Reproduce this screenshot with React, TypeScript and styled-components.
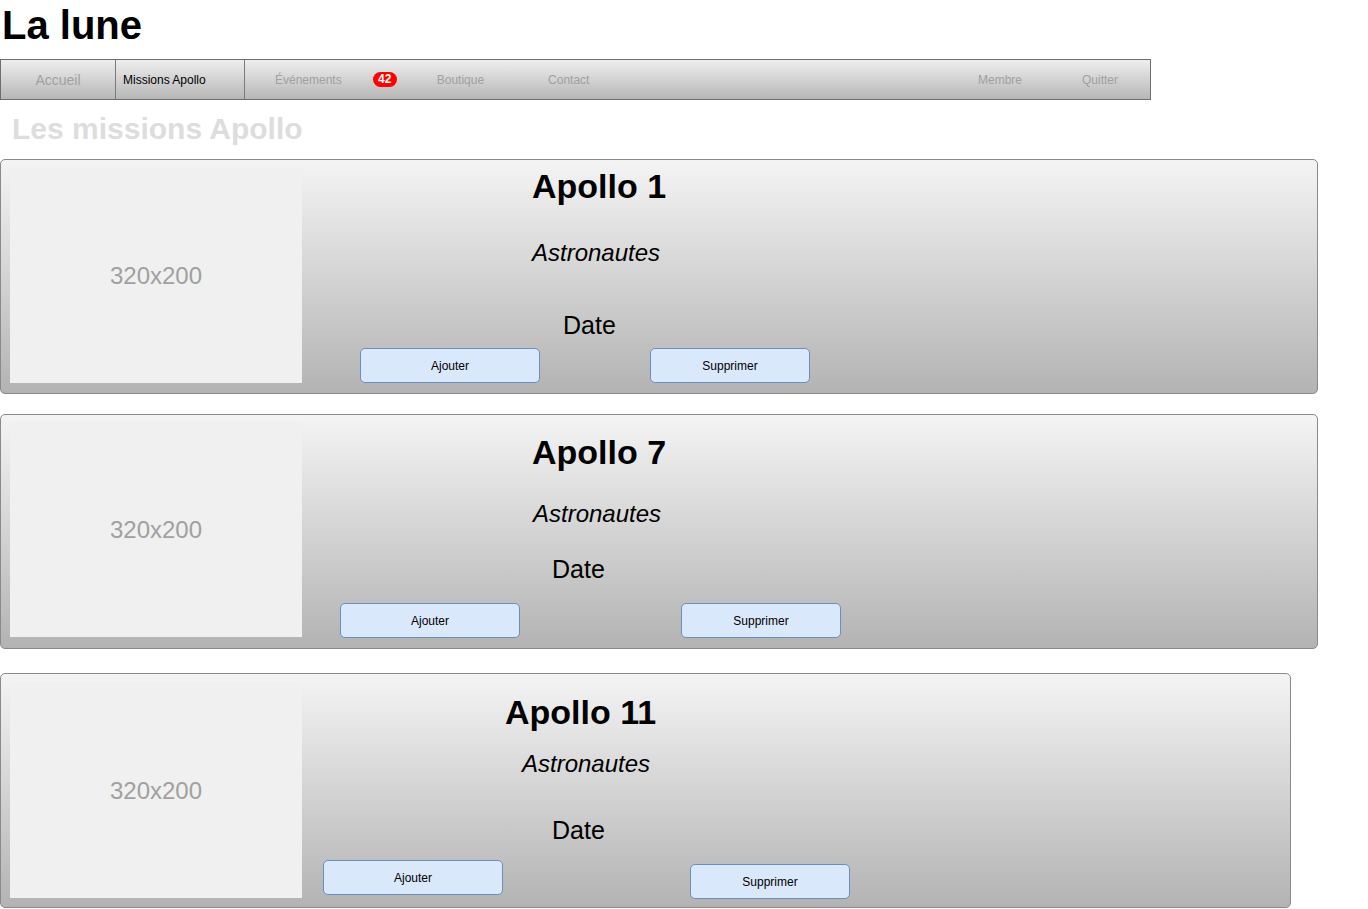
import styled, { createGlobalStyle } from "styled-components";

const GlobalStyle = createGlobalStyle`
  html, body {
    margin: 0;
    padding: 0;
    background: #ffffff;
    font-family: "Liberation Sans", Arial, sans-serif;
  }
  #root {
    width: 1368px;
    height: 909px;
    overflow: hidden;
  }
`;

const Page = styled.div`
  display: flex;
  flex-direction: column;
  align-items: flex-start;
`;

const SiteTitle = styled.h1`
  margin: 0;
  padding: 5px 0 0 2px;
  font-size: 40px;
  line-height: 1;
  font-weight: bold;
  color: #000;
`;

const NavBar = styled.nav`
  margin-top: 14px;
  box-sizing: border-box;
  width: 1151px;
  height: 41px;
  border: 1px solid #6e6e6e;
  background: linear-gradient(#eeeeee, #b7b7b7);
  display: flex;
  align-items: stretch;
  padding-right: 32px;
`;

const NavCell = styled.div<{ $w: number; $pad?: number; $center?: boolean; $active?: boolean; $size?: number }>`
  box-sizing: border-box;
  width: ${(p) => p.$w}px;
  border-right: 1px solid #7a7a7a;
  display: flex;
  align-items: center;
  justify-content: ${(p) => (p.$center ? "center" : "flex-start")};
  padding-left: ${(p) => p.$pad ?? 0}px;
  font-size: ${(p) => p.$size ?? 12}px;
  color: ${(p) => (p.$active ? "#000" : "#a0a0a0")};
`;

const NavLink = styled.span<{ $ml?: number; $push?: boolean }>`
  align-self: center;
  margin-left: ${(p) => (p.$push ? "auto" : `${p.$ml ?? 0}px`)};
  font-size: 12px;
  color: #a0a0a0;
`;

const Badge = styled.span<{ $ml: number }>`
  align-self: center;
  margin-left: ${(p) => p.$ml}px;
  width: 24px;
  height: 15px;
  border-radius: 8px;
  background: #ff0000;
  color: #fff;
  font-size: 12px;
  font-weight: bold;
  line-height: 15px;
  text-align: center;
`;

const SectionTitle = styled.h2`
  margin: 14px 0 0 12px;
  font-size: 30px;
  line-height: 1;
  font-weight: bold;
  color: #dddddd;
`;

const CardList = styled.div`
  margin-top: 15px;
  display: flex;
  flex-direction: column;
`;

const Card = styled.section<{ $w: number; $mt: number }>`
  box-sizing: border-box;
  width: ${(p) => p.$w}px;
  height: 235px;
  margin-top: ${(p) => p.$mt}px;
  border: 1px solid #8a8a8a;
  border-radius: 5px;
  background: linear-gradient(#f4f4f4, #b3b3b3);
  display: flex;
  align-items: flex-start;
`;

const Placeholder = styled.div<{ $mt: number }>`
  margin: ${(p) => p.$mt}px 0 0 9px;
  width: 292px;
  height: 215px;
  background: #f0f0f0;
  display: flex;
  align-items: center;
  justify-content: center;
  font-size: 24px;
  color: #a0a0a0;
  flex-shrink: 0;
`;

const Stage = styled.div`
  display: flex;
  flex-direction: column;
  align-items: flex-start;
`;

const MissionName = styled.h3<{ $mt: number; $ml: number }>`
  margin: ${(p) => p.$mt}px 0 0 ${(p) => p.$ml}px;
  font-size: 34px;
  line-height: 1;
  font-weight: bold;
  color: #000;
  white-space: nowrap;
`;

const Crew = styled.div<{ $mt: number; $ml: number }>`
  margin: ${(p) => p.$mt}px 0 0 ${(p) => p.$ml}px;
  font-size: 24px;
  line-height: 1;
  font-style: italic;
  color: #000;
`;

const LaunchDate = styled.div<{ $mt: number; $ml: number }>`
  margin: ${(p) => p.$mt}px 0 0 ${(p) => p.$ml}px;
  font-size: 25px;
  line-height: 1;
  color: #000;
`;

const Actions = styled.div<{ $mt: number }>`
  margin-top: ${(p) => p.$mt}px;
  display: flex;
  align-items: flex-start;
`;

const ActionButton = styled.button<{ $w: number; $ml: number; $mt?: number }>`
  box-sizing: border-box;
  width: ${(p) => p.$w}px;
  height: 35px;
  margin: ${(p) => p.$mt ?? 0}px 0 0 ${(p) => p.$ml}px;
  padding: 0;
  border: 1px solid #6c8ebf;
  border-radius: 5px;
  background: #dae8fc;
  font-family: "Liberation Sans", Arial, sans-serif;
  font-size: 12px;
  color: #000;
`;

type Mission = {
  name: string;
  width: number;
  gap: number;
  imgTop: number;
  title: [number, number];
  crew: [number, number];
  date: [number, number];
  actionsTop: number;
  add: number;
  remove: number;
  removeDrop?: number;
};

const missions: Mission[] = [
  { name: "Apollo 1", width: 1318, gap: 0, imgTop: 8, title: [9, 230], crew: [38, 230], date: [48, 261], actionsTop: 10, add: 58, remove: 110 },
  { name: "Apollo 7", width: 1318, gap: 20, imgTop: 7, title: [20, 230], crew: [33, 231], date: [31, 250], actionsTop: 21, add: 38, remove: 161 },
  { name: "Apollo 11", width: 1291, gap: 24, imgTop: 9, title: [21, 203], crew: [23, 220], date: [42, 250], actionsTop: 17, add: 21, remove: 187, removeDrop: 4 },
];

export default function App() {
  return (
    <>
      <GlobalStyle />
      <Page>
        <SiteTitle>La lune</SiteTitle>
        <NavBar>
          <NavCell $w={115} $center $size={14}>Accueil</NavCell>
          <NavCell $w={129} $pad={7} $active>Missions Apollo</NavCell>
          <NavLink $ml={30}>Événements</NavLink>
          <Badge $ml={31}>42</Badge>
          <NavLink $ml={40}>Boutique</NavLink>
          <NavLink $ml={64}>Contact</NavLink>
          <NavLink $push>Membre</NavLink>
          <NavLink $ml={60}>Quitter</NavLink>
        </NavBar>
        <SectionTitle>Les missions Apollo</SectionTitle>
        <CardList>
          {missions.map((m) => (
            <Card key={m.name} $w={m.width} $mt={m.gap}>
              <Placeholder $mt={m.imgTop}>320x200</Placeholder>
              <Stage>
                <MissionName $mt={m.title[0]} $ml={m.title[1]}>{m.name}</MissionName>
                <Crew $mt={m.crew[0]} $ml={m.crew[1]}>Astronautes</Crew>
                <LaunchDate $mt={m.date[0]} $ml={m.date[1]}>Date</LaunchDate>
                <Actions $mt={m.actionsTop}>
                  <ActionButton $w={180} $ml={m.add}>Ajouter</ActionButton>
                  <ActionButton $w={160} $ml={m.remove} $mt={m.removeDrop}>Supprimer</ActionButton>
                </Actions>
              </Stage>
            </Card>
          ))}
        </CardList>
      </Page>
    </>
  );
}
